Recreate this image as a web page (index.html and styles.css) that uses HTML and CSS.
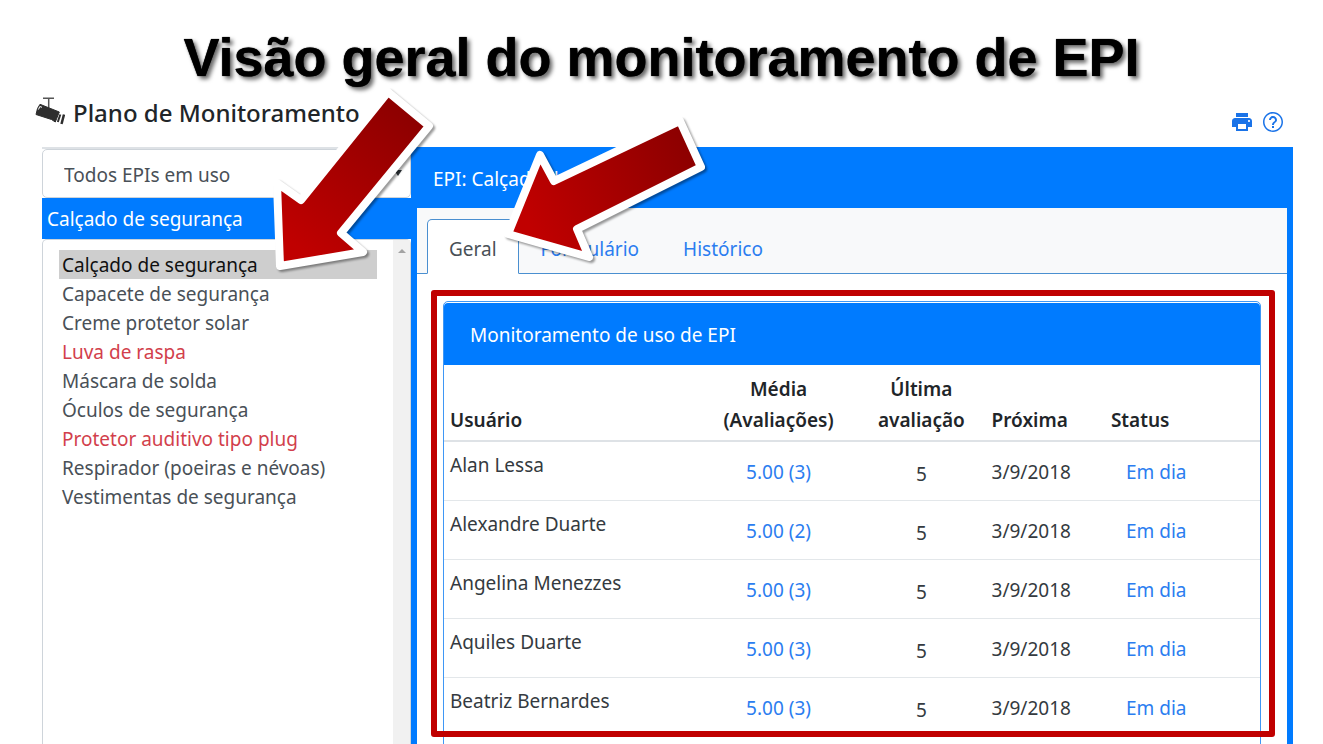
FILE: index.html
```html
<!DOCTYPE html>
<html lang="pt-BR">
<head>
<meta charset="utf-8">
<meta name="viewport" content="width=device-width, initial-scale=1">
<title>Visão geral do monitoramento de EPI</title>
<link rel="stylesheet" href="styles.css">
</head>
<body>
<h1 class="slide-title">Visão geral do monitoramento de EPI</h1>

<div class="app">
  <header class="page-head">
    <svg class="camera" viewBox="0 0 30 30" aria-hidden="true">
      <path d="M8 2.300H19M13.700 2V12" stroke="#555" stroke-width="1.500" fill="none"/>
      <path d="M5 8.300 24.300 16 20.300 26 16.500 23.500 1 18.500 2.500 12.500Z" fill="#2e2e2e" stroke="#2e2e2e" stroke-width="1" stroke-linejoin="round"/>
      <path d="M3.500 13.500 4.800 10.500 7 11.300" stroke="#fff" stroke-width="1" fill="none"/>
      <path d="M25.300 18.500 22.800 26" stroke="#2e2e2e" stroke-width="2" fill="none"/>
      <path d="M29 18.500 26.500 28" stroke="#2e2e2e" stroke-width="2.500" fill="none"/>
    </svg>
    <h2 class="page-title">Plano de Monitoramento</h2>
    <div class="actions">
      <button class="icon-btn" type="button" aria-label="Imprimir">
        <svg viewBox="0 0 24 24" width="24" height="24"><path fill="#1a73e8" d="M19 8H5c-1.660 0-3 1.340-3 3v6h4v4h12v-4h4v-6c0-1.660-1.340-3-3-3zm-3 11H8v-5h8v5zm3-7c-.550 0-1-.450-1-1s.450-1 1-1 1 .450 1 1-.450 1-1 1zM18 3H6v4h12V3z"/></svg>
      </button>
      <button class="icon-btn" type="button" aria-label="Ajuda">
        <svg viewBox="0 0 24 24" width="24" height="24"><path fill="#1a73e8" d="M11 18h2v-2h-2v2zm1-16C6.480 2 2 6.480 2 12s4.480 10 10 10 10-4.480 10-10S17.520 2 12 2zm0 18.500c-4.700 0-8.500-3.800-8.500-8.500s3.800-8.500 8.500-8.500 8.500 3.800 8.500 8.500-3.800 8.500-8.500 8.500zm0-14.500c-2.210 0-4 1.790-4 4h2c0-1.100.900-2 2-2s2 .900 2 2c0 2-3 1.750-3 5h2c0-2.250 3-2.500 3-5 0-2.210-1.790-4-4-4z"/></svg>
      </button>
    </div>
  </header>

  <div class="columns">
    <aside class="sidebar">
      <div class="filter-wrap">
        <select class="filter" aria-label="Filtro de EPIs">
          <option>Todos EPIs em uso</option>
        </select>
        <svg class="caret" viewBox="0 0 8 6" width="8" height="6" aria-hidden="true"><path d="M0 0H8L4 6Z" fill="#343a40"/></svg>
      </div>
      <label class="list-label" for="epi-list">Calçado de segurança</label>
      <div class="list-wrap">
        <select class="epi-list" id="epi-list" size="16">
          <option selected>Calçado de segurança</option>
          <option>Capacete de segurança</option>
          <option>Creme protetor solar</option>
          <option class="late">Luva de raspa</option>
          <option>Máscara de solda</option>
          <option>Óculos de segurança</option>
          <option class="late">Protetor auditivo tipo plug</option>
          <option>Respirador (poeiras e névoas)</option>
          <option>Vestimentas de segurança</option>
        </select>
        <div class="track">
          <svg viewBox="0 0 8 4" width="8" height="4" aria-hidden="true"><path d="M0 4 4 0 8 4Z" fill="#a3a3a3"/></svg>
        </div>
      </div>
    </aside>

    <main class="detail">
      <div class="detail-head">EPI: Calçado de segurança</div>
      <div class="detail-body">
        <nav class="tabs">
          <a class="tab active" href="#geral">Geral</a>
          <a class="tab" href="#formulario">Formulário</a>
          <a class="tab" href="#historico">Histórico</a>
        </nav>
        <section class="panel">
          <div class="card">
            <div class="card-head">Monitoramento de uso de EPI</div>
            <table class="users">
              <colgroup><col class="c-user"><col class="c-avg"><col class="c-last"><col class="c-next"><col class="c-status"></colgroup>
              <thead>
                <tr><th>Usuário</th><th class="center">Média<br>(Avaliações)</th><th class="center">Última<br>avaliação</th><th class="next">Próxima</th><th>Status</th></tr>
              </thead>
              <tbody>
                <tr><td class="name">Alan Lessa</td><td class="center"><a href="#a1">5.00 (3)</a></td><td class="last">5</td><td class="next">3/9/2018</td><td class="status"><a href="#s1">Em dia</a></td></tr>
                <tr><td class="name">Alexandre Duarte</td><td class="center"><a href="#a2">5.00 (2)</a></td><td class="last">5</td><td class="next">3/9/2018</td><td class="status"><a href="#s2">Em dia</a></td></tr>
                <tr><td class="name">Angelina Menezzes</td><td class="center"><a href="#a3">5.00 (3)</a></td><td class="last">5</td><td class="next">3/9/2018</td><td class="status"><a href="#s3">Em dia</a></td></tr>
                <tr><td class="name">Aquiles Duarte</td><td class="center"><a href="#a4">5.00 (3)</a></td><td class="last">5</td><td class="next">3/9/2018</td><td class="status"><a href="#s4">Em dia</a></td></tr>
                <tr><td class="name">Beatriz Bernardes</td><td class="center"><a href="#a5">5.00 (3)</a></td><td class="last">5</td><td class="next">3/9/2018</td><td class="status"><a href="#s5">Em dia</a></td></tr>
              </tbody>
            </table>
          </div>
          <div class="frame"></div>
        </section>
      </div>
    </main>
  </div>
</div>

<svg class="arrows" viewBox="0 0 720 290" width="720" height="290" aria-hidden="true">
  <defs>
    <linearGradient id="g1" gradientUnits="userSpaceOnUse" x1="300" y1="250" x2="410" y2="110"><stop offset="0" stop-color="#c00000"/><stop offset="1" stop-color="#8c0000"/></linearGradient>
    <linearGradient id="g2" gradientUnits="userSpaceOnUse" x1="530" y1="225" x2="690" y2="145"><stop offset="0" stop-color="#c00000"/><stop offset="1" stop-color="#8c0000"/></linearGradient>
  </defs>
  <path d="M388 92 429 126 341 233 363 252 280 266 277 183 301 200Z" fill="url(#g1)"/>
  <path d="M680 121 701 167 577 229 589 257 508 234 540 155 554 181Z" fill="url(#g2)"/>
</svg>
</body>
</html>
```
FILE: styles.css
```css
* { box-sizing: border-box; }

body {
  margin: 0;
  height: 100vh;
  overflow: hidden;
  display: flex;
  flex-direction: column;
  position: relative;
  background: #fff;
  color: #212529;
  font-family: "Noto Sans", sans-serif;
  font-size: 19px;
  line-height: 30px;
}

a { color: #2b7df0; text-decoration: none; }

.slide-title {
  margin: 0;
  padding-top: 23px;
  text-align: center;
  color: #000;
  font: bold 54px/69px "Liberation Sans", Arial, sans-serif;
  text-shadow: 0 0 1px #000, 3px 3px 4px rgba(0, 0, 0, 0.6);
}

.app {
  flex: 1;
  min-height: 0;
  display: flex;
  flex-direction: column;
  padding: 0 30px 0 42px;
}

.page-head {
  display: flex;
  align-items: flex-start;
  height: 55px;
  margin-left: -7px;
  padding-top: 4px;
}
.camera { width: 30px; height: 30px; margin-right: 8px; }
.page-title { margin: 0; font-size: 24px; line-height: 33px; font-weight: 500; }
.actions { display: flex; gap: 7px; margin-left: auto; padding: 14px 8px 0 0; }
.icon-btn { padding: 0; border: 0; background: none; width: 24px; height: 24px; }

.columns {
  flex: 1;
  min-height: 0;
  display: grid;
  grid-template-columns: 369fr 882fr;
}

.sidebar {
  display: flex;
  flex-direction: column;
  min-height: 0;
  border-top: 2px solid #dee2e6;
}
.filter-wrap { position: relative; }
.filter {
  display: block;
  appearance: none;
  width: 100%;
  height: 49px;
  padding: 2px 21px 0;
  border: 1px solid #ced4da;
  border-radius: 5px;
  background: #fff;
  color: #495057;
  font: inherit;
}
.caret { position: absolute; right: 9px; top: 21px; }
.list-label {
  padding: 6px 5px 5px;
  background: #007bff;
  color: #fff;
}
.list-wrap { position: relative; flex: 1; min-height: 0; background: #fff; }
.epi-list {
  display: block;
  width: 100%;
  height: 100%;
  padding: 10px 33px 0 16px;
  border: 1px solid #ced4da;
  border-bottom: 0;
  border-radius: 5px 5px 0 0;
  background: #fff;
  color: #495057;
  font: inherit;
}
.epi-list option { height: 29px; padding: 2px 3px 0; }
.epi-list .late { color: #d23f4c; }
.track {
  position: absolute;
  top: 1px;
  right: 1px;
  bottom: 0;
  width: 17px;
  display: flex;
  justify-content: center;
  padding-top: 9px;
  background: #f1f1f1;
}

.detail { display: flex; flex-direction: column; min-height: 0; background: #007bff; }
.detail-head { padding: 18px 22px 14px; color: #fff; line-height: 29px; }
.detail-body {
  flex: 1;
  min-height: 0;
  margin: 0 6px;
  background: #fff;
}
.tabs {
  display: flex;
  padding: 11px 10px 0;
  background: #f8f9fa;
  border-bottom: 1px solid #4a8fd0;
}
.tab {
  margin-bottom: -1px;
  padding: 14px 21px 9px;
  border: 1px solid transparent;
  border-radius: 5px 5px 0 0;
}
.tab.active {
  color: #495057;
  background: #fff;
  border-color: #4a8fd0 #4a8fd0 #fff;
}

.panel { position: relative; padding: 27px 26px 0; }
.card {
  height: 460px;
  border: 1px solid #3f97f5;
  border-radius: 5px;
}
.card-head {
  margin-top: 1px;
  padding: 17px 26px 15px;
  border-radius: 4px 4px 0 0;
  background: #007bff;
  color: #fff;
}
.users { width: 100%; table-layout: fixed; border-collapse: separate; border-spacing: 0; }
.c-user { width: 31%; }
.c-avg { width: 20%; }
.c-last { width: 15%; }
.c-next { width: 15%; }
.c-status { width: 19%; }
.users th {
  padding: 9px 6px 4px;
  border-bottom: 2px solid #dee2e6;
  text-align: left;
  vertical-align: bottom;
  font-weight: 600;
  line-height: 31px;
}
.users td {
  padding: 15px 6px 13px;
  border-bottom: 1px solid #e3e7ea;
  vertical-align: top;
  color: #343a40;
}
.users .center { text-align: center; }
.users .name { padding-top: 8px; }
.users .last { padding-top: 17px; padding-bottom: 11px; text-align: center; }
.users .next { padding-left: 9px; }
.users .status { padding-left: 21px; }

.frame {
  position: absolute;
  top: 16px;
  left: 14px;
  right: 12px;
  height: 447px;
  border: 6px solid #c00000;
  border-radius: 3px;
}

.arrows {
  position: absolute;
  top: 0;
  left: 0;
  stroke: #fff;
  stroke-width: 8px;
  stroke-linejoin: round;
  filter: drop-shadow(2px 2px 1px rgba(0, 0, 0, 0.4));
}
```
